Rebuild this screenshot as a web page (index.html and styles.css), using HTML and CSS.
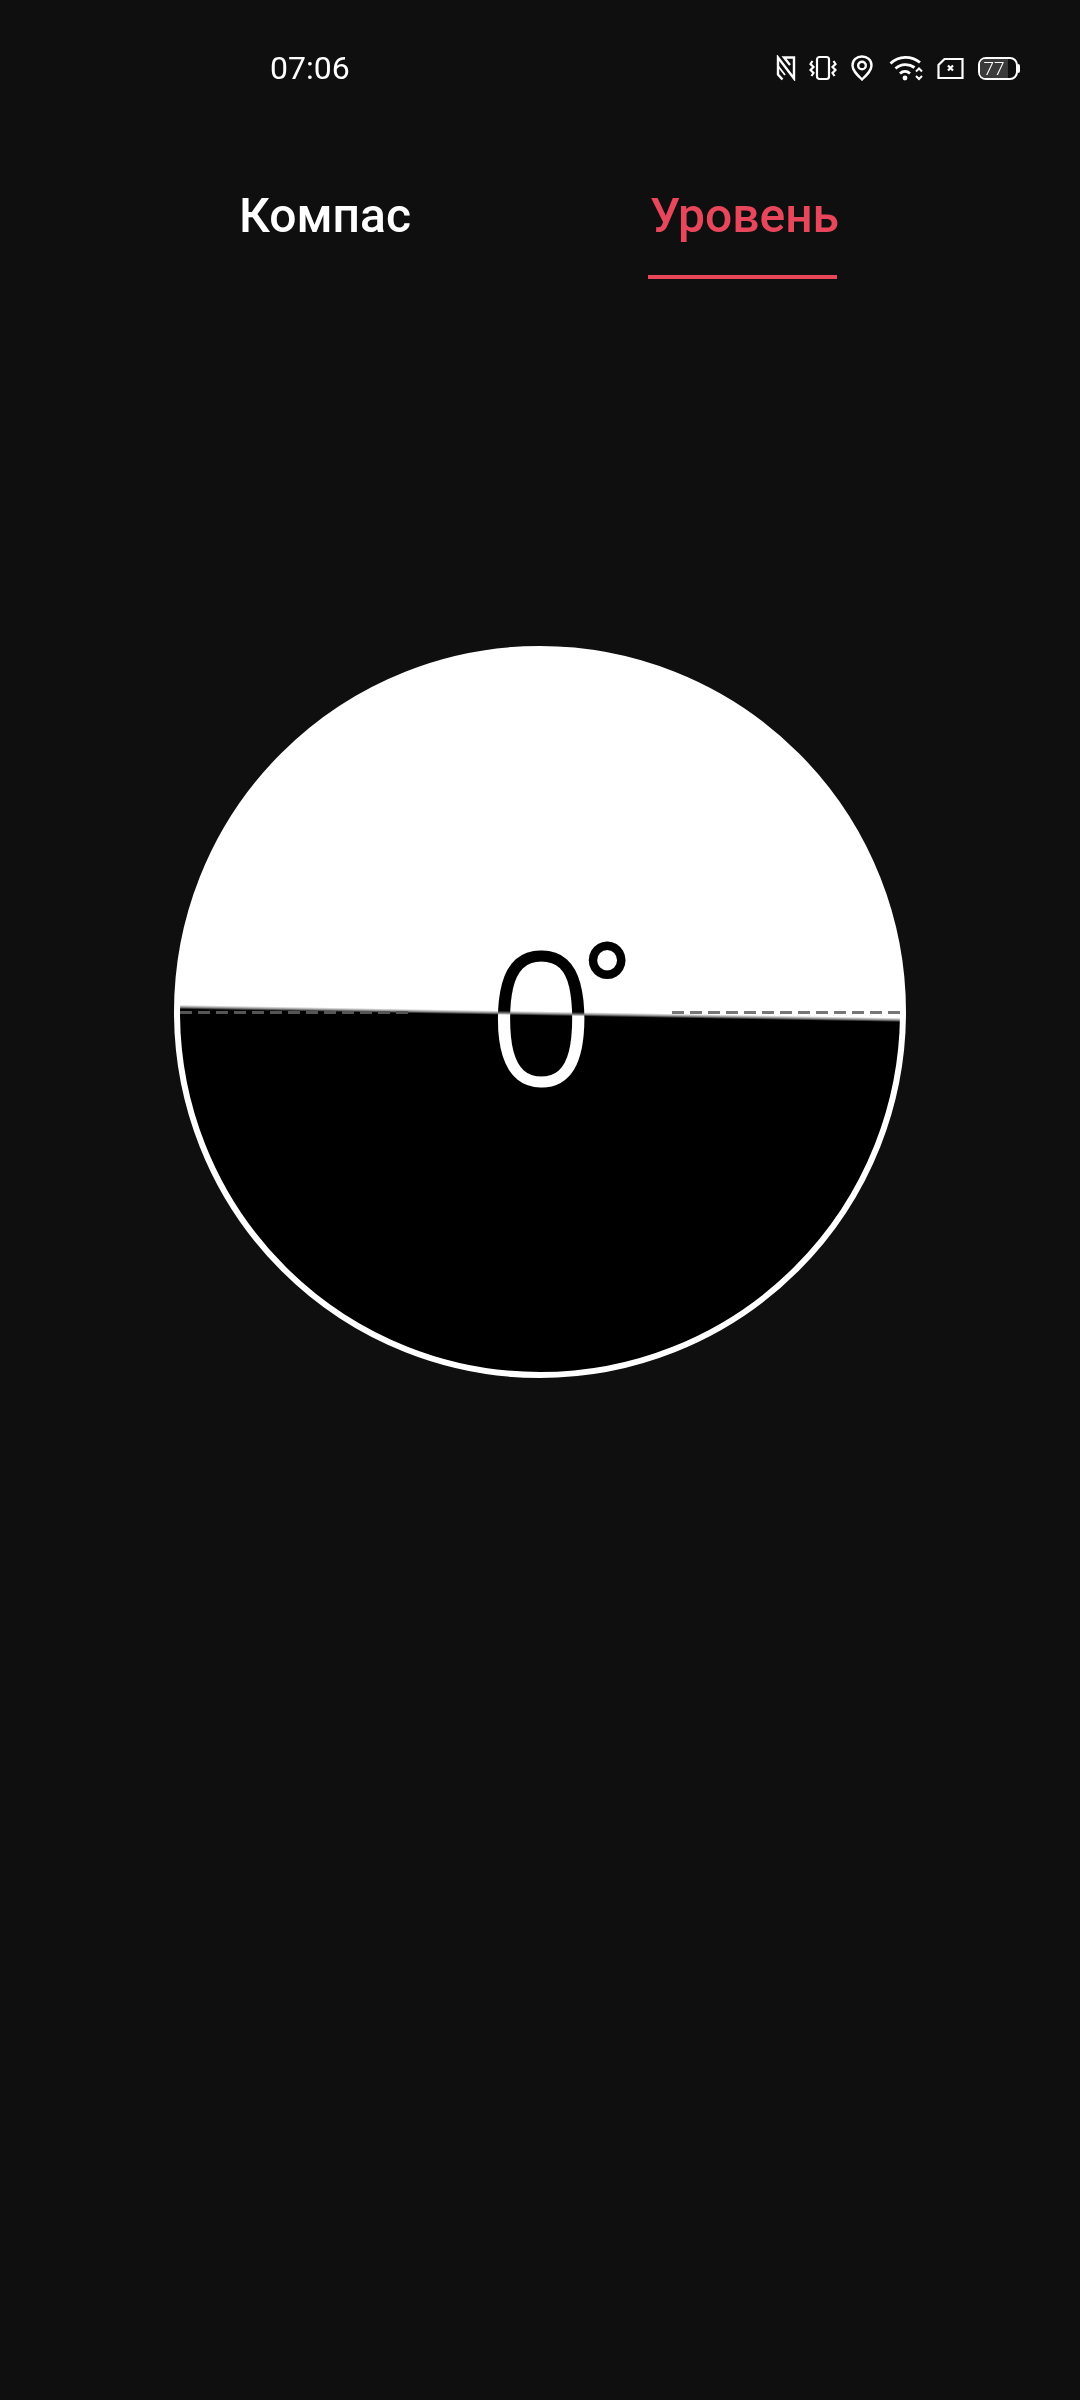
FILE: index.html
```html
<!DOCTYPE html>
<html lang="ru">
<head>
    <meta charset="UTF-8">
    <meta name="viewport" content="width=device-width, initial-scale=1.0">
    <title>Уровень</title>
    <link rel="stylesheet" href="styles.css">
</head>
<body>
    <div class="status-bar">
        <span class="time">07:06</span>
        <div class="status-icons">
            <svg class="icon-nfc" width="20" height="26" viewBox="0 0 20 26" fill="none" stroke="#fff" stroke-width="2.4">
                <path d="M6.5 24.5 L2 19.5 V2.5 L18 23.5 V2.5 H8 L14 10"/>
                <path stroke-width="1.8" d="M2 11 L9 20"/>
            </svg>
            <svg class="icon-vibrate" width="28" height="26" viewBox="0 0 28 26" fill="none" stroke="#fff" stroke-width="2.2">
                <rect x="8" y="2" width="12" height="22" rx="2.5"/>
                <path d="M3.5 6 L1.5 9 L4.5 12 L1.5 15 L4.5 18 L2.5 21"/>
                <path d="M24.5 6 L26.5 9 L23.5 12 L26.5 15 L23.5 18 L25.5 21"/>
            </svg>
            <svg class="icon-pin" width="22" height="26" viewBox="0 0 22 26" fill="none" stroke="#fff" stroke-width="2.4">
                <path d="M11 24.5 C6 19.5 1.5 15.5 1.5 10.5 C1.5 5 5.7 1.5 11 1.5 C16.3 1.5 20.5 5 20.5 10.5 C20.5 15.5 16 19.5 11 24.5 Z"/>
                <circle cx="11" cy="10.5" r="3.8"/>
            </svg>
            <svg class="icon-wifi" width="36" height="26" viewBox="0 0 36 26" fill="none" stroke="#fff" stroke-width="2.8">
                <path d="M1.5 8.5 C10 0.5 22 0.5 31 7.5"/>
                <path d="M6.5 13.5 C12 8.5 20 8.5 25.5 12.5"/>
                <path d="M11 18.5 C14 15.8 18 15.8 21 18.5"/>
                <circle cx="16" cy="23" r="2.4" fill="#fff" stroke="none"/>
                <path stroke-width="2" d="M27 16.5 L30 13.5 L33 16.5"/>
                <path stroke-width="2" d="M27 21 L30 24 L33 21"/>
            </svg>
            <svg class="icon-sim" width="27" height="24" viewBox="0 0 27 24" fill="none" stroke="#fff" stroke-width="2.2">
                <path d="M7.5 3 H25.5 V22 H1.5 V9 Z"/>
                <path stroke-width="2.2" d="M11 9.5 L16 14.5 M16 9.5 L11 14.5"/>
            </svg>
            <div class="battery">
                <div class="battery-level"></div>
                <span class="battery-text">77</span>
                <div class="battery-nub"></div>
            </div>
        </div>
    </div>

    <div class="tabs">
        <div class="tab">Компас</div>
        <div class="tab tab-active">Уровень</div>
    </div>

    <div class="level">
        <div class="dial">
            <div class="dashes">
                <div class="dash-line dash-left"></div>
                <div class="dash-line dash-right"></div>
            </div>
            <div class="reading"><span class="digit">0</span><span class="degree">°</span></div>
        </div>
    </div>
</body>
</html>
```

FILE: styles.css
```css
*{
    margin: 0;
    padding: 0;
    box-sizing: border-box;
}
body{
    width: 1080px;
    height: 2400px;
    background: #0f0f0f;
    font-family: Roboto, "Noto Sans", sans-serif;
    color: white;
    overflow: hidden;
}
.status-bar{
    height: 136px;
    padding: 0 62px 0 270px;
    display: flex;
    justify-content: space-between;
    align-items: center;
}
.time{
    font-size: 32px;
    font-weight: 400;
}
.status-icons{
    display: flex;
    align-items: center;
}
.status-icons svg{
    display: block;
}
.icon-nfc{
    margin-right: 13px;
}
.icon-vibrate{
    margin-right: 14px;
}
.icon-pin{
    margin-right: 16px;
}
.icon-wifi{
    margin-right: 12px;
}
.icon-sim{
    margin-right: 14px;
}
.battery{
    position: relative;
    width: 40px;
    height: 23px;
    border: 2px solid white;
    border-radius: 8px;
}
.battery-level{
    width: 77%;
    height: 100%;
    background: #3a3a3a;
    border-radius: 5px 0 0 5px;
}
.battery-text{
    position: absolute;
    top: 0;
    left: 0;
    width: 28px;
    text-align: center;
    font-size: 19px;
    line-height: 19px;
    font-weight: 300;
}
.battery-nub{
    position: absolute;
    top: 5px;
    right: -4px;
    width: 2px;
    height: 9px;
    background: white;
    border-radius: 0 3px 3px 0;
}
.tabs{
    display: flex;
    padding-left: 239px;
}
.tab{
    font-size: 48px;
    font-weight: 500;
    height: 143px;
    line-height: 60px;
    padding-top: 50px;
}
.tab-active{
    margin-left: 237px;
    width: 189px;
    padding-left: 2px;
    white-space: nowrap;
    color: #e8465b;
    border-bottom: 4px solid #e8465b;
}
.level{
    margin-top: 367px;
    display: flex;
    justify-content: center;
}
.dial{
    position: relative;
    width: 732px;
    height: 732px;
    border: 6px solid white;
    border-radius: 50%;
    background: linear-gradient(181.03deg, white 49.9%, #999 50.2%, black 50.5%);
    overflow: hidden;
}
.dashes{
    position: absolute;
    top: 359px;
    left: 0;
    width: 100%;
    display: flex;
    justify-content: space-between;
}
.dash-line{
    width: 228px;
    height: 3px;
}
.dash-left{
    background: repeating-linear-gradient(90deg, #555 0 12px, transparent 12px 18px);
}
.dash-right{
    background: repeating-linear-gradient(90deg, #777 0 12px, transparent 12px 18px);
}
.reading{
    position: absolute;
    top: 254px;
    left: 309px;
    display: flex;
    align-items: flex-start;
    mix-blend-mode: difference;
    color: white;
}
.digit{
    font-family: "Open Sans", Roboto, sans-serif;
    font-size: 183px;
    line-height: 214px;
    font-weight: 300;
    letter-spacing: -14px;
    -webkit-text-stroke: 3px white;
}
.degree{
    font-size: 146px;
    line-height: 170px;
    font-weight: 300;
    margin-top: 8px;
    -webkit-text-stroke: 2px white;
}
```
